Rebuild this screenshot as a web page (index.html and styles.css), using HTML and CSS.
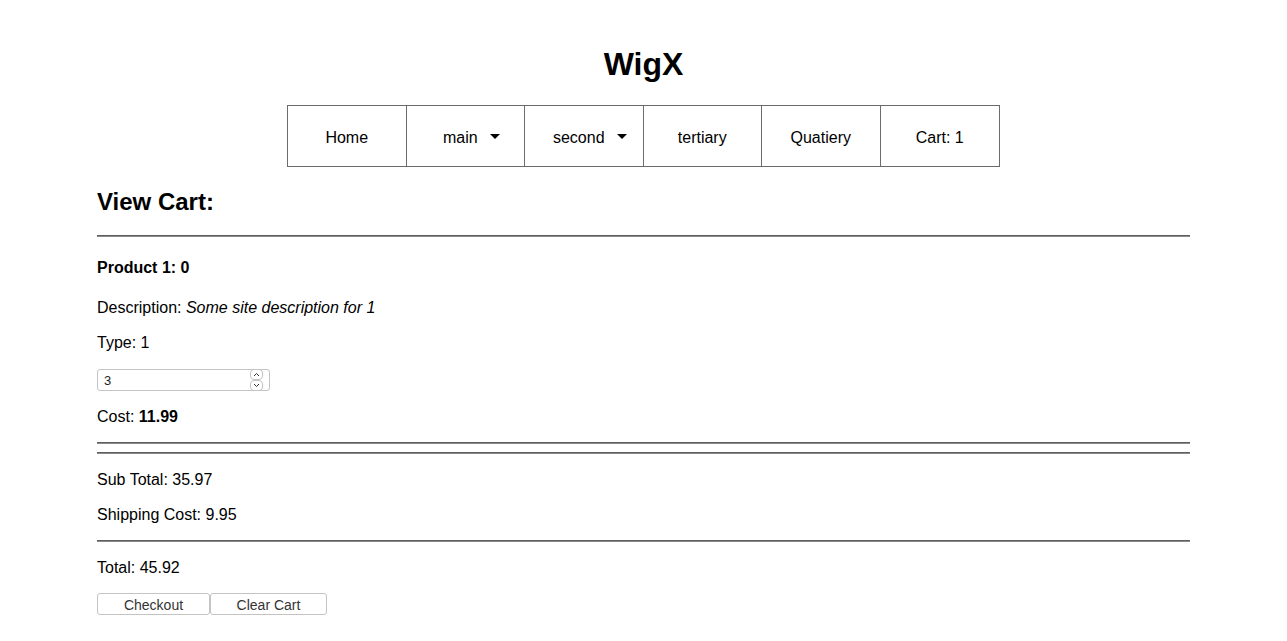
FILE: index.html
```html
<!DOCTYPE html>
<html>
<head>
<meta charset="utf-8">
<title>WigX</title>
<link rel="stylesheet" href="styles.css">
</head>
<body>
<header class="site-header">
  <h1 class="brand">WigX</h1>
  <nav class="nav">
    <a class="nav-item">Home</a>
    <a class="nav-item has-caret">main <span class="caret"></span></a>
    <a class="nav-item has-caret">second <span class="caret"></span></a>
    <a class="nav-item">tertiary</a>
    <a class="nav-item">Quatiery</a>
    <a class="nav-item">Cart: 1</a>
  </nav>
</header>
<main class="cart">
  <h2 class="cart-title">View Cart:</h2>
  <hr class="rule rule-top">
  <p class="line product-name">Product 1: 0</p>
  <p class="line desc">Description: <em>Some site description for 1</em></p>
  <p class="line type">Type: 1</p>
  <div class="qty">
    <span class="qty-value">3</span>
    <span class="spin">
      <span class="spin-btn"><svg width="7" height="5" viewBox="0 0 7 5"><path d="M1 4 L3.5 1.5 L6 4" fill="none" stroke="#333" stroke-width="1"/></svg></span>
      <span class="spin-btn"><svg width="7" height="5" viewBox="0 0 7 5"><path d="M1 1 L3.5 3.5 L6 1" fill="none" stroke="#333" stroke-width="1"/></svg></span>
    </span>
  </div>
  <p class="line cost">Cost: <strong>11.99</strong></p>
  <hr class="rule rule-a">
  <hr class="rule rule-b">
  <p class="line sub">Sub Total: 35.97</p>
  <p class="line ship">Shipping Cost: 9.95</p>
  <hr class="rule rule-c">
  <p class="line total">Total: 45.92</p>
  <div class="actions">
    <button class="btn btn-checkout">Checkout</button><button class="btn btn-clear">Clear Cart</button>
  </div>
</main>
</body>
</html>
```
FILE: styles.css
```css
html, body {
  margin: 0;
  padding: 0;
  background: #fff;
  color: #000;
  font-family: "Liberation Sans", Arial, sans-serif;
}
.site-header {
  display: flex;
  flex-direction: column;
  align-items: center;
}
.brand {
  margin: 46px 0 22px;
  font-size: 32px;
  line-height: 37px;
  font-weight: bold;
}
.nav {
  display: grid;
  grid-template-columns: repeat(6, 1fr);
  width: 713px;
  height: 62px;
  box-sizing: border-box;
  border: 1px solid #6b6b6b;
}
.nav-item {
  display: flex;
  align-items: center;
  justify-content: center;
  padding-top: 4px;
  font-size: 16px;
  color: #000;
  border-right: 1px solid #6b6b6b;
  text-decoration: none;
}
.nav-item:last-child { border-right: none; }
.has-caret { padding-left: 12px; }
.caret {
  display: inline-block;
  width: 0;
  height: 0;
  margin-left: 12px;
  margin-top: -3px;
  border-left: 5px solid transparent;
  border-right: 5px solid transparent;
  border-top: 5px solid #000;
}
.cart {
  margin: 0 97px;
  display: flex;
  flex-direction: column;
  align-items: flex-start;
}
.cart-title {
  margin: 20px 0 0;
  padding-top: 1px;
  font-size: 24px;
  line-height: 28px;
  font-weight: bold;
}
.rule {
  align-self: stretch;
  margin: 0;
  height: 0;
  border: none;
  border-top: 1px solid #5e5e5e;
  border-bottom: 1px solid #8a8a8a;
}
.rule-top { margin-top: 19px; }
.line {
  margin: 0;
  padding-top: 1px;
  font-size: 16px;
  line-height: 18px;
}
.product-name { margin-top: 21px; font-weight: bold; }
.desc { margin-top: 21px; }
.type { margin-top: 16px; }
.qty {
  margin-top: 17px;
  width: 173px;
  height: 22px;
  box-sizing: border-box;
  border: 1px solid #c4c4c4;
  border-radius: 3px;
  display: flex;
  align-items: center;
  justify-content: space-between;
  padding: 0 6px 0 6px;
  font-size: 13px;
}
.qty-value { color: #222; }
.spin {
  display: flex;
  flex-direction: column;
  margin: -1px 0;
}
.spin-btn {
  width: 13px;
  height: 11px;
  box-sizing: border-box;
  border: 1px solid #c4c4c4;
  border-radius: 4px;
  display: flex;
  align-items: center;
  justify-content: center;
}
.cost { margin-top: 16px; }
.rule-a { margin-top: 16px; }
.rule-b { margin-top: 8px; }
.sub { margin-top: 16px; }
.ship { margin-top: 16px; }
.rule-c { margin-top: 16px; }
.total { margin-top: 16px; }
.actions {
  margin-top: 16px;
  display: flex;
}
.btn {
  height: 22px;
  box-sizing: border-box;
  background: #fff;
  border: 1px solid #c4c4c4;
  border-radius: 3px;
  font-family: "Liberation Sans", Arial, sans-serif;
  font-size: 14px;
  color: #333;
  padding: 1px 0 0;
  margin: 0;
}
.btn-checkout { width: 113px; }
.btn-clear { width: 117px; }
```
